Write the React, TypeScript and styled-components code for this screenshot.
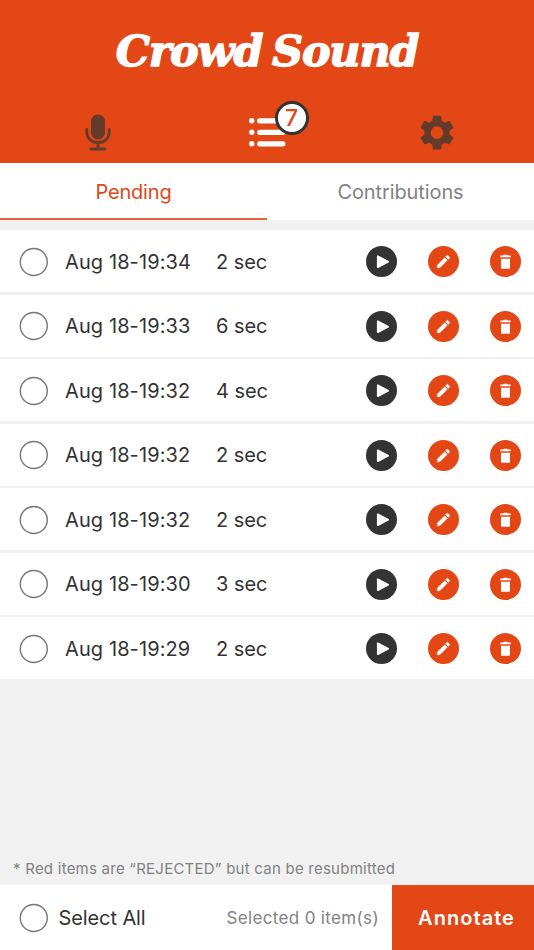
import React from 'react';
import styled, { createGlobalStyle } from 'styled-components';

const ORANGE = '#e34716';
const DARK = '#333333';
const GRAY = '#828282';
const BROWN = '#643a2b';

const GlobalStyle = createGlobalStyle`
  * { box-sizing: border-box; }
  body { margin: 0; background: #f1f1f1; font-family: Inter, "Liberation Sans", sans-serif; }
  button { font: inherit; border: 0; padding: 0; margin: 0; background: none; }
`;

const Screen = styled.div`
  width: 534px;
  height: 950px;
  display: flex;
  flex-direction: column;
  background: #f1f1f1;
  color: ${DARK};
  overflow: hidden;
`;

const Header = styled.header`
  height: 163px;
  flex: none;
  background: ${ORANGE};
  display: flex;
  flex-direction: column;
`;

const Title = styled.h1`
  margin: 0;
  height: 102px;
  text-align: center;
  font: italic bold 43px/103px "DejaVu Serif", serif;
  letter-spacing: -1.2px;
  word-spacing: -4px;
  -webkit-text-stroke: 1.3px #fff;
  color: #fff;
  white-space: nowrap;
`;

const Nav = styled.nav`
  height: 61px;
  display: grid;
  grid-template-columns: 195px 144px 195px;
  justify-items: center;
  align-items: center;
`;

const NavButton = styled.button`
  position: relative;
  display: flex;
`;

const Badge = styled.span`
  position: absolute;
  left: 26px;
  top: -17px;
  width: 34px;
  height: 34px;
  border: 3px solid ${DARK};
  border-radius: 50%;
  background: #fff;
  color: ${ORANGE};
  font-size: 23px;
  line-height: 28px;
  font-weight: 500;
  text-align: center;
`;

const Tabs = styled.div`
  height: 57px;
  flex: none;
  display: grid;
  grid-template-columns: 1fr 1fr;
  background: #fff;
`;

const Tab = styled.button<{ $active?: boolean }>`
  height: 57px;
  padding-top: 2px;
  border-bottom: 2px solid ${p => (p.$active ? '#e4653f' : 'transparent')};
  color: ${p => (p.$active ? ORANGE : GRAY)};
  font-size: 20px;
  letter-spacing: ${p => (p.$active ? '-0.2px' : '-0.1px')};
`;

const List = styled.ul`
  list-style: none;
  margin: 10px 0 0;
  padding: 0;
  display: flex;
  flex-direction: column;
  gap: 2.5px;
`;

const Row = styled.li`
  height: 62px;
  background: #fff;
  display: flex;
  align-items: center;
  padding: 1.4px 13px 0 19px;
`;

const CheckCircle = styled.svg`
  flex: none;
  display: block;
`;

const Stamp = styled.span`
  width: 151px;
  margin-left: 16px;
  font-size: 20px;
  letter-spacing: 0.1px;
  white-space: nowrap;
`;

const Duration = styled.span`
  flex: 1;
  font-size: 20px;
  letter-spacing: -0.05px;
  white-space: nowrap;
`;

const Actions = styled.div`
  display: flex;
  gap: 31px;
`;

const Round = styled.button<{ $dark?: boolean }>`
  width: 31px;
  height: 31px;
  border-radius: 50%;
  background: ${p => (p.$dark ? DARK : ORANGE)};
  display: flex;
  svg { display: block; }
`;

const Note = styled.p`
  margin: auto 0 0;
  padding: 0 13px;
  height: 34px;
  line-height: 35px;
  font-size: 15px;
  letter-spacing: 0.24px;
  color: ${GRAY};
  white-space: nowrap;
`;

const Footer = styled.footer`
  height: 65px;
  flex: none;
  background: #fff;
  display: flex;
  align-items: center;
  padding-left: 19px;
`;

const SelectAll = styled.span`
  margin-left: 9.5px;
  font-size: 20px;
  letter-spacing: -0.1px;
  white-space: nowrap;
`;

const Selected = styled.span`
  margin-left: auto;
  margin-right: 13px;
  font-size: 17px;
  letter-spacing: 0.35px;
  color: ${GRAY};
  white-space: nowrap;
`;

const Annotate = styled.button`
  width: 142px;
  height: 65px;
  padding-left: 7px;
  background: ${ORANGE};
  color: #fff;
  font-size: 20px;
  font-weight: 600;
  letter-spacing: 1.05px;
`;

const Check = () => (
  <CheckCircle width="30" height="30" viewBox="0 0 30 30">
    <circle cx="14.8" cy="15" r="13.5" fill="#fff" stroke="#777" strokeWidth="1.4" />
  </CheckCircle>
);

const MicIcon = () => (
  <svg width="26" height="38" viewBox="0 0 26 38" fill="none" stroke={BROWN} strokeWidth="2.8" strokeLinecap="round">
    <rect x="6" y="0.5" width="14" height="25" rx="7" fill={BROWN} stroke="none" />
    <path d="M1.8 15.5v2.5C1.8 24.5 6.5 28.5 13 28.5s11.2-4 11.2-10.5V15.5M13 29v6M6 35h14" />
  </svg>
);

const ListIcon = () => (
  <svg width="37" height="30" viewBox="0 0 37 30" fill="#fff">
    {[2.8, 14.3, 25.8].map(y => (
      <g key={y}>
        <circle cx="2.7" cy={y} r="2.7" />
        <rect x="8" y={y - 2.6} width="28.5" height="5.2" rx="2.6" />
      </g>
    ))}
  </svg>
);

const GearIcon = () => (
  <svg width="42" height="42" viewBox="0 0 24 24" fill={BROWN}>
    <path transform="translate(0 -.2)" d="M19.14 12.94c.04-.3.06-.61.06-.94 0-.32-.02-.64-.07-.94l2.03-1.58a.49.49 0 0 0 .12-.61l-1.92-3.32a.49.49 0 0 0-.59-.22l-2.39.96c-.5-.38-1.03-.7-1.62-.94l-.36-2.54a.48.48 0 0 0-.48-.41h-3.84a.47.47 0 0 0-.47.41l-.36 2.54c-.59.24-1.13.57-1.62.94l-2.39-.96a.48.48 0 0 0-.59.22L2.74 8.87a.48.48 0 0 0 .12.61l2.03 1.58c-.05.3-.09.63-.09.94s.02.64.07.94l-2.03 1.58a.49.49 0 0 0-.12.61l1.92 3.32c.12.22.37.29.59.22l2.39-.96c.5.38 1.03.7 1.62.94l.36 2.54c.05.24.24.41.48.41h3.84c.24 0 .44-.17.47-.41l.36-2.54c.59-.24 1.13-.56 1.62-.94l2.39.96c.22.08.47 0 .59-.22l1.92-3.32a.48.48 0 0 0-.12-.61l-2.01-1.58zM12 15.6A3.6 3.6 0 1 1 12 8.4a3.6 3.6 0 0 1 0 7.2z" />
  </svg>
);

const PlayIcon = () => (
  <svg width="31" height="31" viewBox="0 0 31 31">
    <path d="M11.8 10.3v10.8l10.4-5.4z" fill="#fff" stroke="#fff" strokeWidth="1.8" strokeLinejoin="round" />
  </svg>
);

const PencilIcon = () => (
  <svg width="31" height="31" viewBox="0 0 31 31" fill="#fff">
    <path d="M9.2 19.2v2.6h2.6l7.5-7.5-2.6-2.6zM17.6 10.7l2.7 2.7 1.2-1.2a.8.8 0 0 0 0-1.1l-1.6-1.6a.8.8 0 0 0-1.1 0z" stroke="#fff" strokeWidth=".4" strokeLinejoin="round" />
  </svg>
);

const TrashIcon = () => (
  <svg width="31" height="31" viewBox="0 0 31 31" fill="#fff">
    <path d="M11 12.7h9v8.8c0 .8-.5 1.3-1.3 1.3h-6.4c-.8 0-1.3-.5-1.3-1.3z" />
    <path d="M10.3 9.6h2.8l.8-.9h3.2l.8.9h2.8v1.7H10.3z" />
  </svg>
);

const recordings = [
  ['Aug 18-19:34', '2 sec'],
  ['Aug 18-19:33', '6 sec'],
  ['Aug 18-19:32', '4 sec'],
  ['Aug 18-19:32', '2 sec'],
  ['Aug 18-19:32', '2 sec'],
  ['Aug 18-19:30', '3 sec'],
  ['Aug 18-19:29', '2 sec'],
];

export default function App() {
  return (
    <Screen>
      <GlobalStyle />
      <Header>
        <Title>Crowd Sound</Title>
        <Nav>
          <NavButton aria-label="Record"><MicIcon /></NavButton>
          <NavButton aria-label="Recordings"><ListIcon /><Badge>7</Badge></NavButton>
          <NavButton aria-label="Settings"><GearIcon /></NavButton>
        </Nav>
      </Header>
      <Tabs>
        <Tab $active>Pending</Tab>
        <Tab>Contributions</Tab>
      </Tabs>
      <List>
        {recordings.map(([stamp, duration], i) => (
          <Row key={i}>
            <Check />
            <Stamp>{stamp}</Stamp>
            <Duration>{duration}</Duration>
            <Actions>
              <Round $dark aria-label="Play"><PlayIcon /></Round>
              <Round aria-label="Edit"><PencilIcon /></Round>
              <Round aria-label="Delete"><TrashIcon /></Round>
            </Actions>
          </Row>
        ))}
      </List>
      <Note>* Red items are “REJECTED” but can be resubmitted</Note>
      <Footer>
        <Check />
        <SelectAll>Select All</SelectAll>
        <Selected>Selected 0 item(s)</Selected>
        <Annotate>Annotate</Annotate>
      </Footer>
    </Screen>
  );
}
